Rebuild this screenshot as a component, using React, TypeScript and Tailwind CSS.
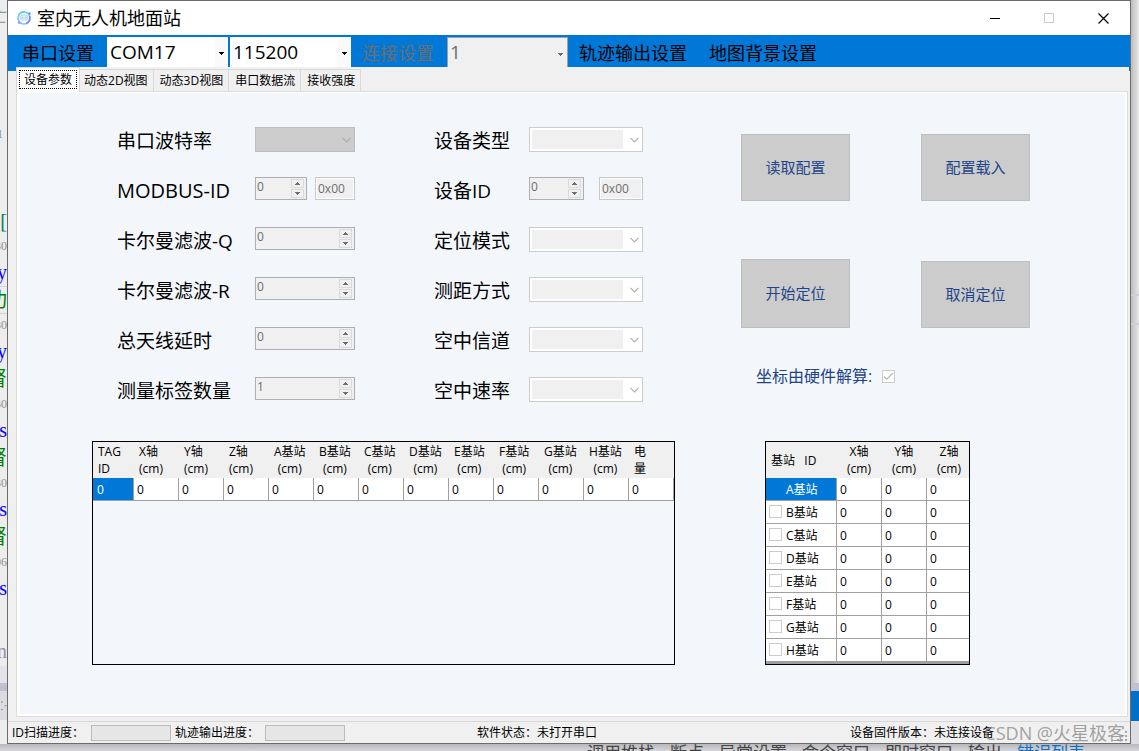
import React, { useState } from "react";

const latin = "font-['Open_Sans','Noto_Sans_CJK_SC',sans-serif]";

function AppIcon() {
  return (
    <svg width="16" height="16" viewBox="0 0 16 16" fill="none" aria-hidden="true">
      <circle cx="8" cy="8" r="6" stroke="#7cc3f3" strokeWidth="1.6" />
      <path d="M3 4.5A6 6 0 0 1 9 2" stroke="#56d3ea" strokeWidth="1.6" />
      <path d="M13.6 6A6 6 0 0 1 10 13.6" stroke="#7d8ff0" strokeWidth="1.8" />
      <rect x="4" y="5" width="8" height="5" rx="2.5" fill="#dcedfc" stroke="#b4d6f8" />
      <circle cx="6.4" cy="7.5" r="0.7" fill="#8fb8f2" />
      <circle cx="9.8" cy="7.5" r="0.7" fill="#8fb8f2" />
      <circle cx="13.4" cy="3.6" r="1.4" fill="#6f9cf0" />
      <circle cx="3.2" cy="12.6" r="1.3" fill="#8f9cf2" />
    </svg>
  );
}

function MenuCombo({ label, options, disabled }: { label: string; options: string[]; disabled?: boolean }) {
  return (
    <div className="relative mt-0.5 h-[30px] w-[121px] shrink-0">
      <select
        aria-label={label}
        disabled={disabled}
        className="block h-full w-full appearance-none rounded-none bg-white pl-[3px] text-[19px] leading-7 text-black outline-none disabled:border-x disabled:border-t disabled:border-[#a0a0a0] disabled:bg-[#f0f0f0] disabled:pb-0.5 disabled:pl-0.5 disabled:text-[#6d6d6d] disabled:opacity-100"
      >
        {options.map((o) => (
          <option key={o}>{o}</option>
        ))}
      </select>
      <span
        className={`pointer-events-none absolute inset-y-0 right-0 flex w-[13px] items-center justify-center pt-0.5 ${
          disabled ? "mt-0.5 mr-px bg-[#f0f0f0] text-[#6d6d6d]" : "bg-[#fafafa] text-black"
        }`}
      >
        <svg width="5" height="3" viewBox="0 0 5 3" fill="currentColor" shapeRendering="crispEdges">
          <path d="M0 0H5V1H4V2H3V3H2V2H1V1H0Z" />
        </svg>
      </span>
    </div>
  );
}

function Chevron() {
  return (
    <svg width="9" height="6" viewBox="0 0 9 6" fill="none" stroke="#b0b0b0" strokeWidth="1.2">
      <path d="M0.5 0.8L4.5 4.8L8.5 0.8" />
    </svg>
  );
}

function Combo({ id, gray }: { id: string; gray?: boolean }) {
  return (
    <div className="relative h-[25px] w-full">
      <select
        id={id}
        disabled
        className={`block h-full w-full appearance-none rounded-none border opacity-100 ${
          gray ? "border-[#bfbfbf] bg-[#cccccc]" : "border-[#cccccc] bg-white"
        }`}
      />
      {!gray && <span className="pointer-events-none absolute inset-y-[3px] right-5 left-[3px] bg-[#f0f0f0]" />}
      <span className="pointer-events-none absolute inset-y-0 right-1 flex items-center">
        <Chevron />
      </span>
    </div>
  );
}

function SpinButton({ up }: { up?: boolean }) {
  return (
    <button
      disabled
      aria-label={up ? "增加" : "减少"}
      className="flex h-[9px] w-[13px] items-center justify-center border border-[#dadada] bg-[#f0f0f0]"
    >
      <svg width="5" height="3" viewBox="0 0 5 3" fill="#6d6d6d" shapeRendering="crispEdges">
        {up ? <path d="M2 0H3V1H4V2H5V3H0V2H1V1H2Z" /> : <path d="M0 0H5V1H4V2H3V3H2V2H1V1H0Z" />}
      </svg>
    </button>
  );
}

function Spin({ id, value, width }: { id: string; value: string; width: string }) {
  return (
    <div className={`flex h-[23px] border border-[#adadb3] bg-[#f0f0f0] py-px pr-0.5 pl-px ${width}`}>
      <input
        id={id}
        disabled
        defaultValue={value}
        className="h-4 min-w-0 flex-1 bg-transparent text-xs text-[#6d6d6d]"
      />
      <div className="flex flex-col justify-between">
        <SpinButton up />
        <SpinButton />
      </div>
    </div>
  );
}

function HexBox({ label, width }: { label: string; width: string }) {
  return (
    <input
      aria-label={label}
      disabled
      defaultValue="0x00"
      className={`h-[23px] border border-[#c8c8c8] bg-[#f0f0f0] pl-[2px] text-xs text-[#6d6d6d] ring-1 ring-white ring-inset ${width}`}
    />
  );
}

function Field({
  id,
  label,
  children,
  labelWidth,
  size = "text-[19px]",
}: {
  id: string;
  label: string;
  labelWidth: string;
  size?: string;
  children: React.ReactNode;
}) {
  return (
    <div className="flex h-[50px] items-start pt-3">
      <label htmlFor={id} className={`shrink-0 leading-7 whitespace-nowrap ${size} ${labelWidth}`}>
        {label}
      </label>
      {children}
    </div>
  );
}

function ActionButton({ children, height }: { children: string; height: string }) {
  return (
    <button
      disabled
      className={`w-[109px] border border-[#bfbfbf] bg-[#cccccc] text-[15px] text-[#1f4588] ${height}`}
    >
      {children}
    </button>
  );
}

const tagColumns = ["X轴", "Y轴", "Z轴", "A基站", "B基站", "C基站", "D基站", "E基站", "F基站", "G基站", "H基站"];

function TagTable() {
  return (
    <div className="h-[224px] w-[583px] shrink-0 border border-black">
      <table className="w-full table-fixed border-separate border-spacing-0 text-left text-xs">
        <colgroup>
          <col className="w-[41px]" />
          {[...tagColumns, "电量"].map((c) => (
            <col key={c} className="w-[45px]" />
          ))}
        </colgroup>
        <thead>
          <tr className="h-9 bg-[#f0f0f0]">
            <th className="p-0 pl-[5px] leading-[17px] font-normal">
              TAG
              <br />
              ID
            </th>
            {tagColumns.map((c) => (
              <th key={c} className="p-0 pl-[5px] leading-[17px] font-normal whitespace-nowrap">
                <span className={c.length > 2 ? "inline-block text-center" : "inline-block"}>
                  {c}
                  <br />
                  (cm)
                </span>
              </th>
            ))}
            <th className="p-0 pl-[5px] leading-[17px] font-normal">
              电
              <br />量
            </th>
          </tr>
        </thead>
        <tbody>
          <tr className="h-[23px]">
            <td className="border-r border-b border-[#a0a0a0] bg-[#0078d7] p-0 pt-0.5 pl-1 text-white">0</td>
            {[...tagColumns, "电量"].map((c) => (
              <td key={c} className="border-r border-b border-[#a0a0a0] bg-white p-0 pt-0.5 pl-[3px]">
                0
              </td>
            ))}
          </tr>
        </tbody>
      </table>
    </div>
  );
}

const stations = ["A", "B", "C", "D", "E", "F", "G", "H"];

function StationTable() {
  return (
    <div className="h-[224px] w-[205px] shrink-0 border border-black bg-[#a0a0a0]">
      <table className="w-full table-fixed border-separate border-spacing-0 text-left text-xs">
        <colgroup>
          <col className="w-[71px]" />
          <col className="w-[45px]" />
          <col className="w-[45px]" />
          <col />
        </colgroup>
        <thead>
          <tr className="h-9 bg-[#f0f0f0]">
            <th className="p-0 pt-0.5 pl-[5px] font-normal whitespace-pre">基站   ID</th>
            {["X轴", "Y轴", "Z轴"].map((c) => (
              <th key={c} className="p-0 pl-2.5 leading-[17px] font-normal">
                <span className="inline-block text-center">
                  {c}
                  <br />
                  (cm)
                </span>
              </th>
            ))}
          </tr>
        </thead>
        <tbody>
          {stations.map((s, i) => (
            <tr key={s} className="h-[23px]">
              <td className={`border-r border-b border-[#a0a0a0] p-0 ${i === 0 ? "bg-[#0078d7] text-white" : "bg-white"}`}>
                <label className="flex items-start pl-[3px]">
                  <input
                    type="checkbox"
                    disabled
                    className={`mt-0.5 mr-1 h-[13px] w-[13px] appearance-none border border-[#cccccc] bg-white ${i === 0 ? "invisible" : ""}`}
                  />
                  <span className="pt-0.5">{s}基站</span>
                </label>
              </td>
              {[0, 1, 2].map((k) => (
                <td key={k} className={`border-b border-[#a0a0a0] bg-white p-0 pt-0.5 pl-[3px] ${k < 2 ? "border-r" : ""}`}>
                  0
                </td>
              ))}
            </tr>
          ))}
        </tbody>
      </table>
    </div>
  );
}

function DevicePanel() {
  return (
    <>
      <div className="flex pt-[22px] pl-[97px]">
        <div className="w-[317px] shrink-0">
          <Field id="baud" label="串口波特率" labelWidth="w-[138px]">
            <div className="w-[100px]">
              <Combo id="baud" gray />
            </div>
          </Field>
          <Field id="modbus" label="MODBUS-ID" labelWidth="w-[138px]" size="text-xl">
            <div className="flex gap-2">
              <Spin id="modbus" value="0" width="w-[52px]" />
              <HexBox label="MODBUS-ID 十六进制" width="w-10" />
            </div>
          </Field>
          <Field id="kq" label="卡尔曼滤波-Q" labelWidth="w-[138px]">
            <Spin id="kq" value="0" width="w-[100px]" />
          </Field>
          <Field id="kr" label="卡尔曼滤波-R" labelWidth="w-[138px]">
            <Spin id="kr" value="0" width="w-[100px]" />
          </Field>
          <Field id="delay" label="总天线延时" labelWidth="w-[138px]">
            <Spin id="delay" value="0" width="w-[100px]" />
          </Field>
          <Field id="tags" label="测量标签数量" labelWidth="w-[138px]">
            <Spin id="tags" value="1" width="w-[100px]" />
          </Field>
        </div>
        <div className="w-[209px] shrink-0">
          <Field id="type" label="设备类型" labelWidth="w-[95px]">
            <Combo id="type" />
          </Field>
          <Field id="devid" label="设备ID" labelWidth="w-[95px]">
            <div className="flex w-full justify-between">
              <Spin id="devid" value="0" width="w-[55px]" />
              <HexBox label="设备ID 十六进制" width="w-11" />
            </div>
          </Field>
          <Field id="mode" label="定位模式" labelWidth="w-[95px]">
            <Combo id="mode" />
          </Field>
          <Field id="range" label="测距方式" labelWidth="w-[95px]">
            <Combo id="range" />
          </Field>
          <Field id="channel" label="空中信道" labelWidth="w-[95px]">
            <Combo id="channel" />
          </Field>
          <Field id="rate" label="空中速率" labelWidth="w-[95px]">
            <Combo id="rate" />
          </Field>
        </div>
        <div className="ml-[98px] shrink-0 pt-[19px]">
          <div className="grid grid-cols-[109px_109px] items-end gap-x-[71px] gap-y-[58px]">
            <ActionButton height="h-[67px]">读取配置</ActionButton>
            <ActionButton height="h-[67px]">配置载入</ActionButton>
            <ActionButton height="h-[69px]">开始定位</ActionButton>
            <ActionButton height="h-[67px]">取消定位</ActionButton>
          </div>
          <label className="mt-9 flex items-center gap-2.5 pl-[15px] text-base leading-6 text-[#1f4588]">
            坐标由硬件解算:
            <span className="relative flex">
              <input
                type="checkbox"
                disabled
                defaultChecked
                className="h-[13px] w-[13px] appearance-none border border-[#cccccc] bg-white"
              />
              <svg className="pointer-events-none absolute inset-0" width="13" height="13" viewBox="0 0 13 13" fill="none" stroke="#b8b8b8" strokeWidth="1.3">
                <path d="M2 6.5L4.8 9.2L11 3" />
              </svg>
            </span>
          </label>
        </div>
      </div>
      <div className="flex gap-[90px] pt-[26px] pb-[49px] pl-[72px]">
        <TagTable />
        <StationTable />
      </div>
    </>
  );
}

const tabs = ["设备参数", "动态2D视图", "动态3D视图", "串口数据流", "接收强度"];

const gutter = [
  { t: "亡", c: "h-[34px] text-[#8a9aa6] text-base" },
  { t: "", c: "h-[87px]" },
  { t: "1", c: "h-[26px] pr-1 text-[#909090] text-xs" },
  { t: "", c: "h-[60px]" },
  { t: "[", c: "h-[28px] text-[#008060] text-xl" },
  { t: "30", c: "h-[22px] text-[#909090] text-xs" },
  { t: "y", c: "h-[29px] text-[#0000ff] text-xl" },
  { t: "功", c: "h-[28px] border-y border-[#d0d0de] text-[#008000] text-xl" },
  { t: "30", c: "h-[22px] text-[#909090] text-xs" },
  { t: "y", c: "h-[29px] text-[#0000ff] text-xl" },
  { t: "督", c: "h-[28px] text-[#008000] text-xl" },
  { t: "30", c: "h-[22px] text-[#909090] text-xs" },
  { t: "s", c: "h-[29px] text-[#0000ff] text-xl" },
  { t: "督", c: "h-[28px] text-[#008000] text-xl" },
  { t: "30", c: "h-[22px] text-[#909090] text-xs" },
  { t: "s", c: "h-[29px] text-[#0000ff] text-xl" },
  { t: "督", c: "h-[28px] text-[#008000] text-xl" },
  { t: "06", c: "h-[22px] text-[#909090] text-xs" },
  { t: "s", c: "h-[29px] text-[#0000ff] text-xl" },
  { t: "", c: "h-[34px]" },
  { t: "m", c: "h-[30px] text-[#9a8fa8] text-xl" },
  { t: "", c: "h-[17px] bg-[#e4e4e8]" },
  { t: "", c: "h-2 bg-[#c0c0d0]" },
  { t: "⁘", c: "h-[29px] bg-[#dcdce0] text-[#808080] text-xs" },
];

const dockItems = ["调用堆栈", "断点", "异常设置", "命令窗口", "即时窗口", "输出"];

export default function App() {
  const [active, setActive] = useState(0);
  return (
    <div className={`relative grid min-h-screen grid-cols-[7px_1fr_8px] grid-rows-[1fr_7px] overflow-hidden bg-[#dedee2] text-black ${latin}`}>
      <div className="overflow-hidden bg-[#ededed] font-['Liberation_Serif','Noto_Sans_CJK_SC',serif]" aria-hidden="true">
        {gutter.map((g, i) => (
          <div key={i} className={`flex items-center justify-end leading-none ${g.c}`}>
            {g.t}
          </div>
        ))}
      </div>

      <main className="flex min-w-0 flex-col border border-[#6b6b6b] bg-[#f0f0f0]">
        <header className="flex h-[34px] items-center bg-white pl-2">
          <AppIcon />
          <h1 className="ml-[5px] flex-1 text-lg leading-8">室内无人机地面站</h1>
          <button aria-label="最小化" className="flex h-8 w-[54px] items-center justify-center">
            <svg width="10" height="10" viewBox="0 0 10 10" shapeRendering="crispEdges">
              <path d="M0 5H10V6H0Z" />
            </svg>
          </button>
          <button aria-label="最大化" disabled className="flex h-8 w-[54px] items-center justify-center">
            <svg width="10" height="10" viewBox="0 0 10 10" fill="none" stroke="#cccccc">
              <rect x="0.5" y="0.5" width="9" height="9" />
            </svg>
          </button>
          <button aria-label="关闭" className="flex h-8 w-[54px] items-center justify-center">
            <svg width="11" height="11" viewBox="0 0 11 11" fill="none" stroke="#000" strokeWidth="1.2">
              <path d="M0.5 0.5L10.5 10.5M10.5 0.5L0.5 10.5" />
            </svg>
          </button>
        </header>

        <nav className="flex h-9 items-start bg-[#0078d7] text-lg leading-9">
          <button className="h-8 w-[99px] pl-3.5 text-left">串口设置</button>
          <MenuCombo label="串口" options={["COM17"]} />
          <span className="w-0.5" />
          <MenuCombo label="波特率" options={["115200"]} />
          <button disabled className="h-8 w-24 pl-[11px] text-left text-[#6d6d6d]">
            连接设置
          </button>
          <MenuCombo label="连接" options={["1"]} disabled />
          <button className="h-8 pr-[11px] pl-[11px]">轨迹输出设置</button>
          <button className="h-8 px-[11px]">地图背景设置</button>
        </nav>

        <section className="relative -mt-1 mr-px ml-2 flex flex-1 flex-col bg-[#f0f0f0] pr-px pb-1">
          <div className="relative -mb-px flex items-end text-xs" role="tablist">
            {tabs.map((t, i) => (
              <button
                key={t}
                role="tab"
                aria-selected={i === active}
                onClick={() => setActive(i)}
                className={
                  i === active
                    ? "relative z-10 -mr-0.5 h-[25px] border-x border-t border-[#d9d9d9] bg-white px-0.5 pt-0.5 pb-[3px]"
                    : "mb-px h-[22px] border-t border-r border-[#d9d9d9] bg-[#f0f0f0] pr-[5px] pl-1.5"
                }
              >
                <span className={i === active ? "flex h-full items-center border border-dotted border-black px-1" : ""}>{t}</span>
              </button>
            ))}
          </div>
          <div role="tabpanel" className="flex-1 border border-[#dcdcdc] bg-white pt-px pr-0.5 pb-0.5 pl-[3px]">
            <div className="h-full bg-[#f3f7fc]">
              <DevicePanel />
            </div>
          </div>
        </section>

        <footer className="flex h-[22px] items-center border-t border-[#d7d7d7] pl-1 text-xs whitespace-nowrap">
          <span className="w-[79px]">ID扫描进度：</span>
          <div role="progressbar" aria-label="ID扫描进度" className="h-4 w-20 border border-[#bcbcbc] bg-[#e6e6e6]" />
          <span className="ml-1 w-[90px]">轨迹输出进度：</span>
          <div role="progressbar" aria-label="轨迹输出进度" className="h-4 w-20 border border-[#bcbcbc] bg-[#e6e6e6]" />
          <span className="ml-[132px] flex-1">软件状态：未打开串口</span>
          <span className="pr-[120px]">设备固件版本：未连接设备</span>
          <svg className="mt-2 mr-0.5" width="14" height="12" viewBox="0 0 14 12" fill="#a8a8a8" shapeRendering="crispEdges" aria-hidden="true">
            <path d="M11 0h2v2h-2zM11 4h2v2h-2zM11 8h2v2h-2zM7 4h2v2h-2zM7 8h2v2h-2zM3 8h2v2h-2z" />
          </svg>
        </footer>
      </main>

      <div className="flex flex-col justify-end bg-linear-to-r from-[#bdbdbd] to-[#e8e8e8]" aria-hidden="true">
        <div className="mb-[358px] h-[31px] border-y-2 border-[#cfcfda]" />
        <div className="h-2 bg-[#c0c0d0]" />
        <div className="h-[30px] bg-[#0070c8]" />
        <div className="h-[23px] bg-[#dcdce2]" />
      </div>

      <div className="col-span-3 flex h-[7px] gap-[15px] overflow-hidden bg-linear-to-b from-[#b8b8bc] to-[#d6d6da] pl-[587px] text-[17px] leading-[18px] whitespace-nowrap text-[#444]">
        {dockItems.map((d) => (
          <span key={d}>{d}</span>
        ))}
        <a href="#errors" className="text-[#0e70c0]">
          错误列表
        </a>
      </div>

      <div className="pointer-events-none absolute right-[14px] bottom-1.5 text-lg leading-6 text-[#8c8c8c]/80">CSDN @火星极客</div>
    </div>
  );
}
